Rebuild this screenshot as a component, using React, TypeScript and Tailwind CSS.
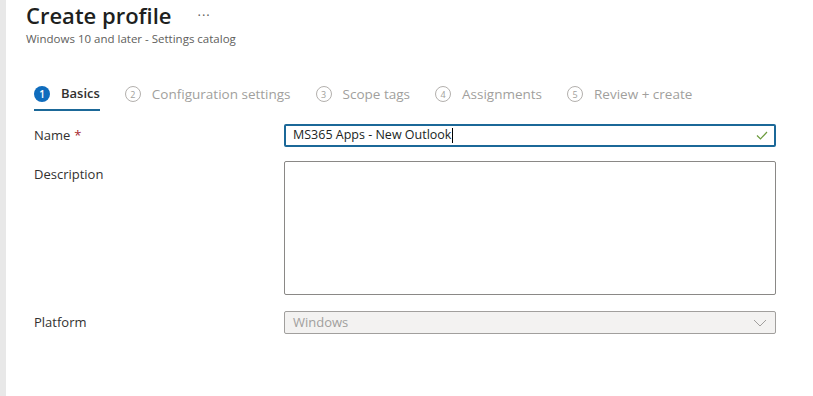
import React from 'react';

const font = { fontFamily: '"Segoe UI", "Open Sans", "Noto Sans", sans-serif' };

const steps = ['Basics', 'Configuration settings', 'Scope tags', 'Assignments', 'Review + create'];

const StepTab = ({ n, label, active }: { n: number; label: string; active: boolean }) => (
    <div className="flex flex-col">
        <div className="flex items-center gap-[11px] h-[22px]">
            {active ? (
                <span className="w-[16px] h-[16px] rounded-full bg-[#0f6cbd] text-white text-[10px] font-semibold flex items-center justify-center leading-none">
                    {n}
                </span>
            ) : (
                <span className="w-[16px] h-[16px] rounded-full border border-[#b3b0ad] text-[#a19f9d] text-[9px] flex items-center justify-center leading-none">
                    {n}
                </span>
            )}
            <span className={active ? 'text-[13px] font-semibold text-[#323130]' : 'text-[13.5px] text-[#a19f9d]'}>
                {label}
            </span>
        </div>
        <div className={active ? 'h-[2px] mt-[4px] bg-[#1b6898]' : 'h-[2px] mt-[4px]'} />
    </div>
);

export default function App() {
    return (
        <div className="w-[813px] h-[396px] flex bg-white overflow-hidden" style={font}>
            <div className="w-[6px] h-full bg-[#e8e8e8]" />
            <div className="flex-1 pl-[20px]">
                <div className="flex items-center h-[30px]">
                    <h1 className="text-[22px] font-semibold text-[#201f1e] leading-[30px]">Create profile</h1>
                    <span className="ml-[26px] text-[#605e5c] text-[13px] tracking-[1px] mt-[2px]">···</span>
                </div>
                <p className="text-[11.5px] text-[#605e5c] leading-[16px] mt-[1px]">Windows 10 and later - Settings catalog</p>

                <div className="flex gap-[25px] pl-[8px] mt-[36px]">
                    {steps.map((s, i) => (
                        <StepTab key={s} n={i + 1} label={s} active={i === 0} />
                    ))}
                </div>

                <div className="pl-[8px] mt-[13px] text-[13px] text-[#323130]">
                    <div className="flex">
                        <div className="w-[250px] h-[23px] flex items-center">
                            Name <span className="text-[#a4262c] ml-[4px]">*</span>
                        </div>
                        <div className="w-[492px] h-[23px] border-2 border-[#1b6898] rounded-[2px] flex items-center px-[7px] relative">
                            <span className="text-[#201f1e] text-[12.5px]">MS365 Apps - New Outlook</span>
                            <span className="w-px h-[15px] bg-black ml-[1px]" />
                            <svg className="absolute right-[6px] top-[5px]" width="12" height="9" viewBox="0 0 12 9">
                                <path d="M1 4.5 L4.5 8 L11 1" fill="none" stroke="#6b9a3c" strokeWidth="1.2" />
                            </svg>
                        </div>
                    </div>

                    <div className="flex mt-[14px]">
                        <div className="w-[250px] pt-[4px] leading-[18px]">Description</div>
                        <div className="w-[492px] h-[134px] border border-[#8a8886] rounded-[2px] bg-white" />
                    </div>

                    <div className="flex mt-[16px]">
                        <div className="w-[250px] h-[23px] flex items-center">Platform</div>
                        <div className="w-[492px] h-[23px] border border-[#a19f9d] rounded-[2px] bg-[#f3f2f1] flex items-center justify-between px-[8px]">
                            <span className="text-[#a19f9d]">Windows</span>
                            <svg width="14" height="8" viewBox="0 0 14 8">
                                <path d="M1 1 L7 7 L13 1" fill="none" stroke="#a19f9d" strokeWidth="1" />
                            </svg>
                        </div>
                    </div>
                </div>
            </div>
        </div>
    );
}
